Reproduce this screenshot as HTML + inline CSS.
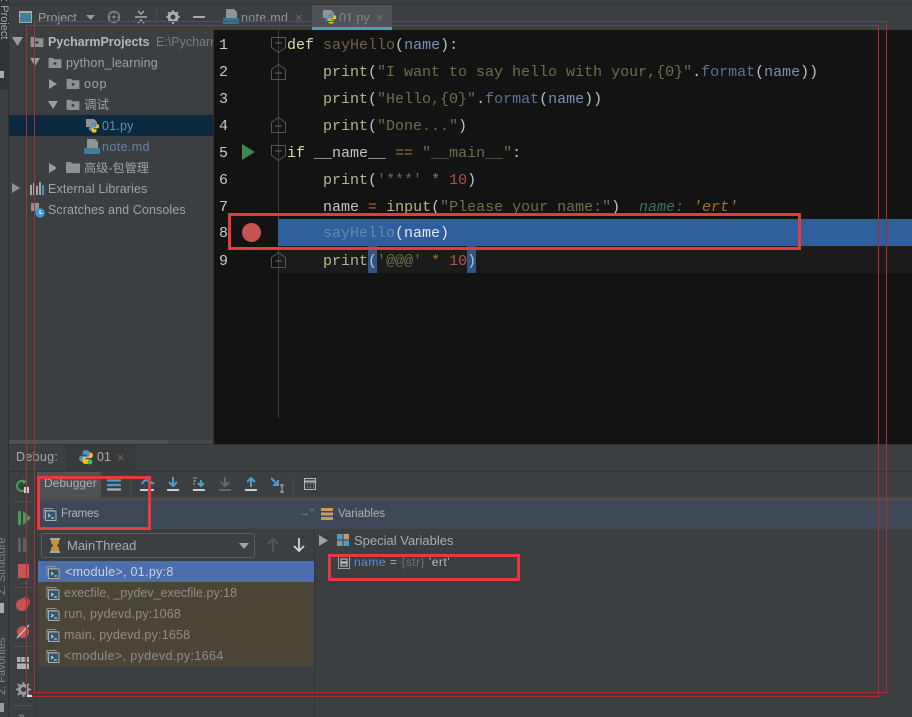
<!DOCTYPE html>
<html><head><meta charset="utf-8"><style>
html,body{margin:0;padding:0;background:#3c3f41}
#r{position:relative;width:912px;height:717px;overflow:hidden;background:#3c3f41;font-family:"Liberation Sans","Noto Sans CJK SC",sans-serif;color:#bbb;font-size:12.5px}
#r div,#r svg,#r span.a{position:absolute}
.t{white-space:nowrap;line-height:16px}
.tr{letter-spacing:.2px}
.m{font-family:"Liberation Mono",monospace;font-size:15px;white-space:pre;line-height:20px;color:#b8b89a}
.n{font-family:"Liberation Mono",monospace;font-size:15px;color:#c8c8c8;left:219px;line-height:20px}
.k{color:#dcdca0}.p{color:#b4b48a}.s{color:#667349}.f{color:#587594}.v{color:#7a90b4}.w{color:#bfc3c6}.h{color:#6f6148}.o{color:#a8703a}.d{color:#b35442}
.rb{border:3px solid #e53a3e;box-sizing:border-box}
.rl{border:1px solid #b32b31;box-sizing:border-box}
</style></head><body><div id="r">
<svg width="0" height="0" style="left:0;top:0"><defs>
<symbol id="fr" viewBox="0 0 14 14"><path d="M1.500 1.500h9M1 3.500h10M1 1v11" stroke="#8f9295" fill="none"/><rect x="2.500" y="4" width="10.500" height="9.500" fill="#34566b" stroke="#a9adb0"/><path d="M5 7l2 1.500L5 10M8 11h3" stroke="#d8e4ea" fill="none"/></symbol>
<symbol id="fo" viewBox="0 0 14 12"><path d="M0 1h5l1 1.500h8V12H0z" fill="#8b9195"/><circle cx="7" cy="7" r="1.600" fill="#3c3f41"/></symbol>
<symbol id="fold" viewBox="0 0 15 16"><path d="M.5 .5h14v10l-7 5-7-5z" fill="none" stroke="#555"/><path d="M4 6h7" stroke="#666"/></symbol>
<symbol id="foldu" viewBox="0 0 15 16"><path d="M.5 15.500h14v-10l-7-5-7 5z" fill="none" stroke="#555"/><path d="M4 9h7" stroke="#666"/></symbol>
<symbol id="py" viewBox="0 0 14 14"><path d="M7 1C4 1 4 2 4 3v2h3.500v1H3C1 6 1 8 1 8.500 1 11 3 11 4 11V9c0-1 1-2 2-2h3c1 0 1-1 1-2V3c0-1-1-2-3-2z" fill="#4f8ec2"/><path d="M7 13c3 0 3-1 3-2V9H6.500V8H11c2 0 2-2 2-2.500C13 3 11 3 10 3v2c0 1-1 2-2 2H5C4 7 4 8 4 9v2c0 1 1 2 3 2z" fill="#f0c419"/></symbol>
</defs></svg>

<!-- left strip -->
<div style="left:0;top:0;width:9px;height:717px;background:#3c3f41;border-right:1px solid #2f3133;box-sizing:border-box"></div>
<div style="left:0;top:0;width:8px;height:90px;background:#313335"></div>
<div class="t" style="left:-21px;top:10px;color:#a5a8aa;font-size:11px;transform:rotate(90deg);width:50px">1: Project</div>
<div style="left:0;top:71px;width:4px;height:7px;background:#aaa"></div>
<div class="t" style="left:-28px;top:557px;color:#85888a;font-size:11px;transform:rotate(-90deg);width:60px;text-align:left">Z: Structure</div>
<div style="left:0;top:603px;width:4px;height:10px;background:#aaa"></div>
<div class="t" style="left:-28px;top:657px;color:#85888a;font-size:11px;transform:rotate(-90deg);width:60px">2: Favorites</div>
<div style="left:0;top:703px;width:4px;height:9px;background:#999"></div>

<!-- top project header -->
<div style="left:9px;top:4px;width:205px;height:26px;background:#3c3f41;border-top:1px solid #333;box-sizing:border-box"></div>
<div style="left:19px;top:11px;width:13px;height:12px;background:#3f7f9f;border:1px solid #aaa;border-top-width:2px;box-sizing:border-box"></div>
<div class="t" style="left:38px;top:10px;color:#9a9d9f">Project</div>
<svg style="left:86px;top:15px" width="9" height="6"><path d="M0 0h9L4.500 5z" fill="#999"/></svg>
<svg style="left:107px;top:10px" width="14" height="14"><circle cx="7" cy="7" r="5.500" fill="none" stroke="#888" stroke-width="1.500"/><circle cx="7" cy="7" r="1.500" fill="#888"/><path d="M7 1v3M7 10v3M1 7h3M10 7h3" stroke="#888"/></svg>
<svg style="left:134px;top:10px" width="14" height="14"><path d="M1 7h12" stroke="#aaa" stroke-width="1.500"/><path d="M4 1l3 3 3-3M4 13l3-3 3 3" stroke="#aaa" fill="none" stroke-width="1.500"/></svg>
<div style="left:156px;top:8px;width:1px;height:18px;background:#4a4c4e"></div>
<svg style="left:166px;top:10px" width="14" height="14"><circle cx="7" cy="7" r="4" fill="none" stroke="#b0b0b0" stroke-width="3"/><path d="M7 0v3M7 11v3M0 7h3M11 7h3M2 2l2 2M10 10l2 2M12 2l-2 2M2 12l2-2" stroke="#b0b0b0" stroke-width="1.500"/></svg>
<div style="left:193px;top:16px;width:12px;height:2px;background:#aaa"></div>

<!-- tree -->
<div style="left:9px;top:115px;width:205px;height:21px;background:#0d293e"></div>
<svg style="left:12px;top:37px" width="11" height="9"><path d="M0 0h11L5.500 9z" fill="#9a9da0"/></svg>
<svg style="left:30px;top:36px" width="14" height="11"><use href="#fo"/></svg>
<div class="t" style="left:48px;top:34px;font-weight:bold;color:#b5b8ba;letter-spacing:-.05px">PycharmProjects</div>
<div class="t" style="left:156px;top:34px;color:#7b7e80;width:58px;overflow:hidden">E:\Pycharm</div>
<svg style="left:30px;top:58px" width="10" height="8"><path d="M0 0h10L5 8z" fill="#9a9da0"/></svg>
<svg style="left:48px;top:57px" width="14" height="11"><use href="#fo"/></svg>
<div class="t tr" style="left:66px;top:55px;color:#a0a2a4">python_learning</div>
<svg style="left:49px;top:79px" width="8" height="10"><path d="M0 0v10l8-5z" fill="#9a9da0"/></svg>
<svg style="left:66px;top:78px" width="14" height="11"><use href="#fo"/></svg>
<div class="t" style="left:84px;top:76px;color:#a0a2a4;letter-spacing:.8px">oop</div>
<svg style="left:48px;top:101px" width="10" height="8"><path d="M0 0h10L5 8z" fill="#9a9da0"/></svg>
<svg style="left:66px;top:99px" width="14" height="11"><use href="#fo"/></svg>
<div class="t" style="left:84px;top:97px;color:#a0a2a4">调试</div>
<svg style="left:85px;top:118px" width="15" height="16"><path d="M1 1h8l3 3v5H1z" fill="#8f9498"/><svg x="3" y="3" width="12" height="13"><use href="#py"/></svg></svg>
<div class="t tr" style="left:102px;top:118px;color:#5f8fb8">01.py</div>
<svg style="left:84px;top:139px" width="16" height="16"><path d="M3 0h8l3 3v6H3z" fill="#8f9498"/><rect x="0" y="9" width="16" height="6" fill="#3d7f9f"/></svg>
<div class="t" style="left:102px;top:139px;color:#5d84a8;letter-spacing:.4px">note.md</div>
<svg style="left:49px;top:163px" width="8" height="10"><path d="M0 0v10l8-5z" fill="#9a9da0"/></svg>
<svg style="left:66px;top:162px" width="14" height="11"><path d="M0 0h5l1 1.500h8V11H0z" fill="#8b9195"/></svg>
<div class="t" style="left:84px;top:160px;color:#a0a2a4;font-size:12.200px">高级-包管理</div>
<svg style="left:12px;top:183px" width="8" height="10"><path d="M0 0v10l8-5z" fill="#8d9093"/></svg>
<svg style="left:30px;top:182px" width="15" height="13"><path d="M1 3v10M4 1v12M7 4v9M10 0v13" stroke="#a0a4a8" stroke-width="2"/><path d="M13 3v10" stroke="#4f8ec2" stroke-width="2"/></svg>
<div class="t" style="left:48px;top:181px;color:#a0a2a4;letter-spacing:.12px">External Libraries</div>
<svg style="left:30px;top:203px" width="16" height="15"><path d="M1 0h8v8H1z" fill="#8f9498"/><circle cx="10" cy="10" r="4.800" fill="#3a9ad9"/><path d="M10 7v3.500h2.500" stroke="#fff" fill="none"/></svg>
<div class="t" style="left:48px;top:202px;color:#a0a2a4;letter-spacing:.1px">Scratches and Consoles</div>
<div style="left:213px;top:30px;width:1px;height:414px;background:#2f3133"></div>

<!-- editor tabs -->
<div style="left:214px;top:4px;width:698px;height:26px;background:#3c3f41;border-top:1px solid #333;box-sizing:border-box"></div>
<div style="left:312px;top:5px;width:80px;height:25px;background:#4e5254"></div>
<div style="left:312px;top:27px;width:80px;height:3px;background:#4a9fba"></div>
<svg style="left:223px;top:9px" width="16" height="16"><path d="M3 0h8l3 3v6H3z" fill="#8f9498"/><rect x="0" y="9" width="16" height="6" fill="#3d6f8f"/></svg>
<div class="t" style="left:241px;top:10px;color:#909498;letter-spacing:.3px">note.md</div>
<div class="t" style="left:295px;top:10px;color:#6b6e70">×</div>
<svg style="left:322px;top:9px" width="15" height="16"><path d="M1 1h8l3 3v5H1z" fill="#8f9498"/><svg x="3" y="3" width="12" height="13"><use href="#py"/></svg></svg>
<div class="t" style="left:339px;top:10px;color:#808c94">01.py</div>
<div class="t" style="left:376px;top:10px;color:#74787a">×</div>

<!-- editor -->
<div style="left:214px;top:30px;width:698px;height:414px;background:#131313"></div>
<div style="left:278px;top:246px;width:634px;height:27px;background:#1b1b1b"></div>
<div style="left:278px;top:30px;width:1px;height:388px;background:#3f3f3f"></div>
<div style="left:278px;top:219px;width:634px;height:27px;background:#2e5f9c"></div>
<div style="left:368px;top:246px;width:9px;height:27px;background:#2d5687"></div>
<div style="left:467px;top:246px;width:9px;height:27px;background:#2d5687"></div>

<svg style="left:271px;top:37px" width="15" height="16"><use href="#fold"/></svg>
<svg style="left:271px;top:64px" width="15" height="16"><use href="#foldu"/></svg>
<svg style="left:271px;top:117px" width="15" height="16"><use href="#foldu"/></svg>
<svg style="left:271px;top:145px" width="15" height="16"><use href="#fold"/></svg>
<svg style="left:271px;top:252px" width="15" height="16"><use href="#foldu"/></svg>
<svg style="left:242px;top:144px" width="13" height="16"><path d="M0 0v16l13-8z" fill="#3f8a4a"/></svg>
<div style="left:242px;top:223px;width:19px;height:19px;border-radius:50%;background:#c75450"></div>

<div class="n" style="top:36px">1</div><div class="n" style="top:63px">2</div><div class="n" style="top:90px">3</div><div class="n" style="top:117px">4</div><div class="n" style="top:144px">5</div><div class="n" style="top:171px">6</div><div class="n" style="top:198px">7</div><div class="n" style="top:224px">8</div><div class="n" style="top:252px">9</div>

<div class="m" style="left:287px;top:36px"><span class="k">def</span> <span class="h">sayHello</span><span class="w">(</span><span class="v">name</span><span class="w">):</span></div>
<div class="m" style="left:323px;top:63px"><span class="p">print</span><span class="w">(</span><span class="s">"I want to say hello with your,{0}"</span><span class="w">.</span><span class="f">format</span><span class="w">(</span><span class="v">name</span><span class="w">))</span></div>
<div class="m" style="left:323px;top:90px"><span class="p">print</span><span class="w">(</span><span class="s">"Hello,{0}"</span><span class="w">.</span><span class="f">format</span><span class="w">(</span><span class="v">name</span><span class="w">))</span></div>
<div class="m" style="left:323px;top:117px"><span class="p">print</span><span class="w">(</span><span class="s">"Done..."</span><span class="w">)</span></div>
<div class="m" style="left:287px;top:144px"><span class="k">if</span> <span class="w">__name__</span> <span class="o">==</span> <span class="s">"__main__"</span><span class="w">:</span></div>
<div class="m" style="left:323px;top:171px"><span class="p">print</span><span class="w">(</span><span class="s">'***'</span> <span class="o">*</span> <span class="d">10</span><span class="w">)</span></div>
<div class="m" style="left:323px;top:198px"><span class="w">name</span> <span class="o">=</span> <span class="p">input</span><span class="w">(</span><span class="s">"Please your name:"</span><span class="w">)</span></div>
<div class="m" style="left:639px;top:198px;font-style:italic;color:#3b7360">name: <span style="color:#a8702a">'ert'</span></div>
<div class="m" style="left:323px;top:224px"><span style="color:#6688aa">sayHello</span><span style="color:#dfe6ee">(name)</span></div>
<div class="m" style="left:323px;top:252px"><span class="p">print</span><span class="w">(</span><span class="s">'@@@'</span> <span class="o">*</span> <span class="d">10</span><span class="w">)</span></div>

<!-- debug header -->
<div style="left:9px;top:444px;width:903px;height:273px;background:#3c3f41;border-top:1px solid #2f3133;box-sizing:border-box"></div>
<div style="left:9px;top:440px;width:159px;height:4px;background:#4f5153"></div>
<div style="left:168px;top:440px;width:45px;height:4px;background:#45484a"></div>
<div class="t" style="left:16px;top:449px;color:#a5a8aa;letter-spacing:.3px">Debug:</div>
<div style="left:66px;top:445px;width:70px;height:26px;background:#37393b"></div>
<svg style="left:78px;top:449px" width="16" height="16"><use href="#py"/><circle cx="12" cy="13" r="2.500" fill="#3ec63e"/></svg>
<div class="t" style="left:97px;top:449px;color:#a9abad">01</div>
<div class="t" style="left:117px;top:450px;color:#6b6e70">×</div>

<!-- debugger toolbar -->
<div style="left:9px;top:471px;width:903px;height:1px;background:#323436"></div>
<div style="left:37px;top:472px;width:64px;height:27px;background:#4e5254"></div>
<div style="left:37px;top:497px;width:875px;height:4px;background:#4a4c4e"></div>
<div class="t" style="left:44px;top:475px;color:#aeb1b3;font-size:12px">Debugger</div>
<svg style="left:107px;top:479px" width="14" height="12"><path d="M0 1.500h14M0 6h14" stroke="#4a9fd0" stroke-width="2.200"/><path d="M0 10.500h14" stroke="#b0b3b5" stroke-width="2.200"/></svg>
<div style="left:130px;top:476px;width:1px;height:20px;background:#4a4c4e"></div>
<svg style="left:140px;top:477px" width="15" height="15"><path d="M2 7c2-5 8-5 10 0" stroke="#4a9fd0" stroke-width="2" fill="none"/><path d="M9 5h5v3" fill="#4a9fd0"/><path d="M0 13h14" stroke="#ccc" stroke-width="2"/></svg>
<svg style="left:166px;top:477px" width="14" height="15"><path d="M7 0v8M3 5l4 4 4-4" stroke="#4a9fd0" stroke-width="2" fill="none"/><path d="M1 13h12" stroke="#ccc" stroke-width="2"/></svg>
<svg style="left:192px;top:477px" width="14" height="15"><path d="M9 3v5M6 6l3 3 3-3" stroke="#4a9fd0" stroke-width="2" fill="none"/><path d="M1 1h4M1 4h3M1 7h2" stroke="#aaa"/><path d="M1 13h12" stroke="#ccc" stroke-width="2"/></svg>
<svg style="left:218px;top:477px" width="14" height="15"><path d="M7 0v8M3 5l4 4 4-4" stroke="#666" stroke-width="2" fill="none"/><path d="M1 13h12" stroke="#666" stroke-width="2"/></svg>
<svg style="left:244px;top:477px" width="14" height="15"><path d="M7 10V2M3 5l4-4 4 4" stroke="#4a9fd0" stroke-width="2" fill="none"/><path d="M1 13h12" stroke="#ccc" stroke-width="2"/></svg>
<svg style="left:270px;top:477px" width="16" height="16"><path d="M1 1l7 7M8 3v5H3" stroke="#4a9fd0" stroke-width="2" fill="none"/><path d="M10 8h4M10 15h4M12 8v7" stroke="#bbb"/></svg>
<div style="left:293px;top:476px;width:1px;height:20px;background:#4a4c4e"></div>
<svg style="left:304px;top:478px" width="12" height="12"><rect x=".5" y=".5" width="11" height="11" fill="none" stroke="#b5b8ba"/><path d="M0 3.500h12" stroke="#b5b8ba" stroke-width="2"/><path d="M3 6h1M6 6h1M9 6h1M3 9h1M6 9h1M9 9h1" stroke="#b5b8ba"/></svg>

<!-- frames / vars headers -->
<div style="left:37px;top:501px;width:875px;height:28px;background:#3d4757"></div>
<svg style="left:43px;top:507px" width="14" height="14"><use href="#fr"/></svg>
<div class="t" style="left:61px;top:506px;font-size:11.500px;color:#b4b7ba;letter-spacing:-.2px">Frames</div>
<div class="t" style="left:299px;top:505px;font-size:11px;color:#8a8d90">→"</div>
<svg style="left:321px;top:508px" width="12" height="12"><path d="M0 0h12v3H0zM0 4.500h12v3H0zM0 9h12v3H0z" fill="#c79c5a"/></svg>
<div class="t" style="left:338px;top:506px;font-size:11.500px;color:#aeb1b4">Variables</div>

<!-- left toolbar -->
<div style="left:36px;top:472px;width:1px;height:245px;background:#323436"></div>
<div style="left:13px;top:501px;width:20px;height:1px;background:#4c4e50"></div>
<svg style="left:15px;top:479px" width="15" height="15"><path d="M12 7a5 5 0 1 1-2-4" stroke="#499c54" stroke-width="2" fill="none"/><path d="M8 0l4 3-4 2z" fill="#499c54"/><rect x="9" y="8" width="5" height="6" fill="#ccc"/></svg>
<svg style="left:17px;top:511px" width="14" height="14"><path d="M1 0h3v14H1z" fill="#499c54"/><path d="M6 0v14l8-7z" fill="#499c54"/></svg>
<div style="left:18px;top:538px;width:3px;height:14px;background:#5c5e60"></div>
<div style="left:23px;top:538px;width:3px;height:14px;background:#5c5e60"></div>
<div style="left:18px;top:564px;width:11px;height:14px;background:#c75450"></div>
<div style="left:13px;top:587px;width:20px;height:1px;background:#4c4e50"></div>
<svg style="left:15px;top:596px" width="16" height="16"><circle cx="10" cy="6" r="5" fill="#c75450" opacity=".8"/><circle cx="7" cy="9" r="6" fill="#c75450"/></svg>
<svg style="left:16px;top:623px" width="15" height="16"><circle cx="7" cy="9" r="6" fill="#c75450"/><path d="M1 15L13 2" stroke="#bbb" stroke-width="1.500"/></svg>
<div style="left:13px;top:646px;width:20px;height:1px;background:#4c4e50"></div>
<svg style="left:17px;top:657px" width="12" height="12" viewBox="0 0 12 12" preserveAspectRatio="none"><path d="M0 0h3.500v5H0zM4.200 0h3.500v5H4.200zM8.500 0H12v5H8.500zM0 6.500h12V12H0z" fill="#aeb1b3"/></svg>
<svg style="left:16px;top:682px" width="15" height="15"><circle cx="7.500" cy="7.500" r="4" fill="none" stroke="#9a9da0" stroke-width="3"/><path d="M7.500 0v3M7.500 12v3M0 7.500h3M12 7.500h3M2 2l2 2M11 11l2 2M13 2l-2 2M2 13l2-2" stroke="#9a9da0" stroke-width="2"/></svg>
<div style="left:13px;top:705px;width:20px;height:1px;background:#4c4e50"></div>
<div class="t" style="left:18px;top:708px;color:#9a9da0;font-size:12px">»</div>

<!-- thread combo -->
<div style="left:41px;top:533px;width:214px;height:25px;border:1px solid #5a5d5f;border-radius:2px;box-sizing:border-box;background:#3c3f41"></div>
<svg style="left:49px;top:538px" width="12" height="15"><path d="M1 1h10M1 14h10" stroke="#ccc" stroke-width="1.500"/><path d="M2 2h8v3L8 7.500l2 2.500v3H2v-3l2-2.500L2 5z" fill="#c8903c"/></svg>
<div class="t" style="left:67px;top:538px;font-size:13px;color:#a9abad">MainThread</div>
<svg style="left:239px;top:543px" width="10" height="6"><path d="M0 0h10L5 6z" fill="#a0a3a5"/></svg>
<svg style="left:267px;top:538px" width="12" height="14"><path d="M6 14V1M1 6l5-5 5 5" stroke="#55585a" stroke-width="1.800" fill="none"/></svg>
<svg style="left:293px;top:538px" width="12" height="14"><path d="M6 0v13M1 8l5 5 5-5" stroke="#d0d2d4" stroke-width="1.800" fill="none"/></svg>

<!-- frames -->
<div style="left:38px;top:561px;width:276px;height:21px;background:#4b6eaf"></div>
<div style="left:38px;top:582px;width:276px;height:84px;background:#4a4537"></div>
<div style="left:314px;top:529px;width:1px;height:188px;background:#323436"></div>
<svg style="left:46px;top:565px" width="14" height="14"><use href="#fr"/></svg>
<svg style="left:46px;top:586px" width="14" height="14"><use href="#fr"/></svg>
<svg style="left:46px;top:607px" width="14" height="14"><use href="#fr"/></svg>
<svg style="left:46px;top:628px" width="14" height="14"><use href="#fr"/></svg>
<svg style="left:46px;top:649px" width="14" height="14"><use href="#fr"/></svg>
<div class="t" style="left:65px;top:564px;color:#cdd3dc;letter-spacing:.3px">&lt;module&gt;, 01.py:8</div>
<div class="t" style="left:64px;top:585px;color:#8f8f87">execfile, _pydev_execfile.py:18</div>
<div class="t" style="left:64px;top:606px;color:#8f8f87;letter-spacing:.2px">run, pydevd.py:1068</div>
<div class="t" style="left:64px;top:627px;color:#8f8f87;letter-spacing:.2px">main, pydevd.py:1658</div>
<div class="t" style="left:64px;top:648px;color:#8f8f87;letter-spacing:.37px">&lt;module&gt;, pydevd.py:1664</div>

<!-- variables -->
<svg style="left:319px;top:535px" width="9" height="11"><path d="M0 0v11l9-5.500z" fill="#a0a3a5"/></svg>
<svg style="left:337px;top:534px" width="12" height="12"><rect width="5.500" height="5.500" fill="#4a9fc8"/><rect x="6.500" width="5.500" height="5.500" fill="#c79c5a"/><rect y="6.500" width="5.500" height="5.500" fill="#8f9498"/><rect x="6.500" y="6.500" width="5.500" height="5.500" fill="#4a9fc8"/></svg>
<div class="t" style="left:354px;top:533px;color:#a9abad;font-size:13px">Special Variables</div>
<svg style="left:338px;top:556px" width="12" height="13"><rect x=".5" y=".5" width="11" height="12" fill="none" stroke="#a0a3a5"/><rect x="3" y="3" width="6" height="3" fill="none" stroke="#ccc"/><rect x="3" y="7" width="6" height="3" fill="none" stroke="#ccc"/></svg>
<div class="t" style="left:354px;top:554px;font-size:12px;letter-spacing:.5px"><span style="color:#5c8fd6">name</span> <span style="color:#a9abad">=</span> <span style="color:#6e7173">{str}</span> <span style="color:#b8babc">'ert'</span></div>

<!-- thin red frames -->
<div class="rl" style="left:34px;top:21px;width:853px;height:672px"></div>
<div class="rl" style="left:26px;top:25px;width:853px;height:672px"></div>
<div style="left:27px;top:695px;width:5px;height:2px;background:#ddd"></div>
<!-- thick red boxes -->
<div class="rb" style="left:228px;top:213px;width:573px;height:37px"></div>
<div class="rb" style="left:37px;top:476px;width:114px;height:54px"></div>
<div class="rb" style="left:328px;top:554px;width:192px;height:27px"></div>
</div></body></html>
